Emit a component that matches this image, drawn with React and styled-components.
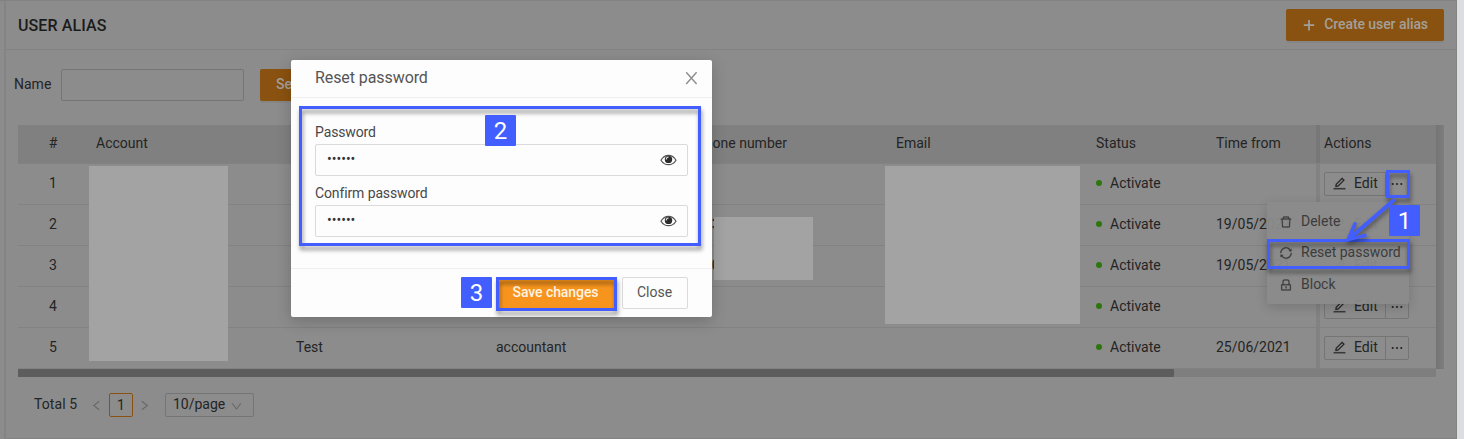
import React from "react";
import styled, { createGlobalStyle, css } from "styled-components";
import {
  AiOutlineEdit,
  AiOutlineDelete,
  AiOutlineSync,
  AiOutlineLock,
  AiOutlineLeft,
  AiOutlineRight,
  AiOutlineDown,
} from "react-icons/ai";

const Global = createGlobalStyle`
  * { box-sizing: border-box; }
  body {
    margin: 0;
    background: #8c8c8c;
    font-family: Roboto, "Liberation Sans", sans-serif;
    font-size: 14px;
    color: #242424;
    overflow: hidden;
  }
  svg { display: block; flex: none; }
`;

const Page = styled.div`
  position: relative;
  display: flex;
  width: 1464px;
  height: 439px;
  overflow: hidden;
`;
const SideEdge = styled.div`
  width: 6px;
  border-right: 2px solid #848484;
  border-top: 1px solid #828282;
`;
const Panel = styled.main`
  flex: 1;
  display: flex;
  flex-direction: column;
  border: 1px solid #838383;
  border-left: 0;
`;
const RightStrip = styled.div`
  width: 7px;
  background: #dcdde3;
`;
const PanelHeader = styled.header`
  display: flex;
  align-items: center;
  justify-content: space-between;
  height: 49px;
  padding: 0 12px;
  border-bottom: 1px solid #828282;
`;
const Title = styled.h1`
  margin: 0;
  font-size: 16px;
  font-weight: 500;
  letter-spacing: 0.1px;
  color: #1b1b1b;
`;
const PrimaryButton = styled.button`
  display: flex;
  align-items: center;
  gap: 8px;
  height: 32px;
  padding: 0 16px 2px;
  border: 0;
  border-radius: 2px;
  background: #8a5210;
  box-shadow: 0 2px 0 rgba(0, 0, 0, 0.04);
  color: #a3a09b;
  font: 500 14px Roboto, sans-serif;
  letter-spacing: -0.07px;
  svg { position: relative; top: 1px; }
`;
const SearchRow = styled.div`
  display: flex;
  align-items: center;
  height: 32px;
  margin: 19px 0 24px 8px;
`;
const SearchLabel = styled.label`
  width: 47px;
  padding-bottom: 2px;
`;
const SearchInput = styled.div`
  width: 183px;
  height: 32px;
  margin-right: 16px;
  border: 1px solid #757575;
  border-radius: 2px;
`;

const TableFrame = styled.section`
  display: grid;
  grid-template-columns: 1418px 8px;
  grid-template-rows: 244px 8px;
  margin-left: 12px;
  width: 1426px;
`;
const VerticalTrack = styled.div`
  background: linear-gradient(90deg, #757575, #7d7d7d);
`;
const HorizontalTrack = styled.div`
  background: #7e7e7e;
`;
const Thumb = styled.div`
  width: 1156px;
  height: 8px;
  border-radius: 1px;
  background: #5d5d5d;
`;
const TableRow = styled.div`
  display: grid;
  grid-template-columns: 70px 200px 200px 200px 200px 200px 120px 112px 116px;
  height: ${(p) => (p.$head ? 39 : 41)}px;
  border-bottom: 1px solid #828282;
  background: ${(p) => (p.$head ? "#808080" : "transparent")};
`;
const Cell = styled.div`
  display: flex;
  align-items: center;
  padding: 0 8px 2px;
  white-space: nowrap;
  ${(p) => p.$center && css`justify-content: center;`}
  ${(p) =>
    p.$fixed &&
    css`
      padding: 0 4px 2px;
      box-shadow: -4px 0 0 rgba(0, 0, 0, 0.07);
    `}
`;
const Status = styled.span`
  display: flex;
  align-items: center;
  gap: 8px;
  &::before {
    content: "";
    width: 6px;
    height: 6px;
    border-radius: 50%;
    background: #2d760d;
  }
`;
const ActionGroup = styled.div`
  display: flex;
  width: 85px;
  height: 24px;
  margin-top: 1px;
  border: 1px solid #757575;
  border-radius: 2px;
`;
const EditAction = styled.div`
  display: flex;
  align-items: center;
  gap: 7px;
  width: 61px;
  padding: 0 0 2px 7px;
  border-right: 1px solid #757575;
  svg { position: relative; top: 1px; }
`;
const MoreAction = styled.div`
  display: flex;
  flex: 1;
  align-items: center;
  justify-content: center;
`;

const Pagination = styled.nav`
  display: flex;
  align-items: center;
  height: 24px;
  margin: 16px 0 0 28px;
`;
const Total = styled.span`
  width: 56px;
  padding-bottom: 2px;
  letter-spacing: 0.1px;
`;
const Arrow = styled.span`
  width: ${(p) => p.$w}px;
  color: #626262;
`;
const CurrentPage = styled.span`
  display: flex;
  align-items: center;
  justify-content: center;
  width: 24px;
  height: 24px;
  margin-right: 5px;
  border: 1px solid #8a5210;
  border-radius: 2px;
`;
const PageSize = styled.div`
  display: flex;
  align-items: center;
  justify-content: space-between;
  width: 89px;
  height: 24px;
  margin-left: 8px;
  padding: 0 10px 2px 7px;
  border: 1px solid #757575;
  border-radius: 2px;
  svg { position: relative; top: 2px; color: #686868; }
`;

const placed = css`
  position: absolute;
  left: ${(p) => p.$x}px;
  top: ${(p) => p.$y}px;
  width: ${(p) => p.$w}px;
  height: ${(p) => p.$h}px;
`;
const Redaction = styled.div`
  ${placed}
  background: #a3a3a3;
`;
const Highlight = styled.div`
  ${placed}
  border: 3px solid #425eff;
  filter: drop-shadow(1px 4px 2px rgba(0, 0, 0, 0.42));
  pointer-events: none;
`;
const Badge = styled.div`
  position: absolute;
  left: ${(p) => p.$x}px;
  top: ${(p) => p.$y}px;
  display: flex;
  align-items: center;
  justify-content: center;
  width: 31px;
  height: 31px;
  border-radius: 1px;
  background: #425eff;
  color: #fff;
  font-family: Roboto, sans-serif;
  font-size: 24px;
`;
const ArrowDrawing = styled.svg`
  position: absolute;
  left: 1335px;
  top: 190px;
  filter: drop-shadow(1px 3px 2px rgba(0, 0, 0, 0.4));
`;

const Menu = styled.div`
  position: absolute;
  left: 1267px;
  top: 202px;
  width: 142px;
  height: 102px;
  padding: 3px 0 4px;
  border-radius: 2px;
  background: rgba(139, 139, 139, 0.95);
  box-shadow: 0 3px 12px rgba(0, 0, 0, 0.16);
`;
const MenuItem = styled.div`
  display: flex;
  align-items: center;
  gap: 8px;
  height: 31.6px;
  padding-left: 12px;
  color: #3c3c3c;
  svg { position: relative; top: 1px; stroke: currentColor; stroke-width: 18px; }
`;

const Modal = styled.div`
  position: absolute;
  left: 291px;
  top: 60px;
  display: flex;
  flex-direction: column;
  width: 421px;
  height: 257px;
  border-radius: 2px;
  background: #fdfdfd;
  box-shadow: 0 4px 16px rgba(0, 0, 0, 0.2);
  color: #555;
`;
const ModalHeader = styled.div`
  display: flex;
  align-items: center;
  justify-content: space-between;
  height: 38px;
  padding: 0 14px 2px 24px;
  border-bottom: 1px solid #f0f0f0;
  font-size: 16px;
  letter-spacing: -0.08px;
  svg { color: #8d8d8d; }
`;
const ModalBody = styled.div`
  flex: 1;
  padding: 24px 24px 0;
`;
const Field = styled.div`
  height: 61px;
`;
const FieldLabel = styled.label`
  display: block;
  height: 22px;
  line-height: 20px;
  letter-spacing: -0.12px;
  color: #484848;
`;
const PasswordBox = styled.div`
  display: flex;
  align-items: center;
  justify-content: space-between;
  width: 373px;
  height: 32px;
  padding: 0 10px 1px 11px;
  border: 1px solid #dadada;
  border-radius: 2px;
`;
const Dots = styled.span`
  color: #333;
  padding-bottom: 2px;
`;
const ModalFooter = styled.div`
  display: flex;
  justify-content: flex-end;
  gap: 8px;
  height: 49px;
  padding: 8px 24px 0;
  border-top: 1px solid #f0f0f0;
`;
const ModalButton = styled.button`
  height: 32px;
  padding: 0 1px 2px 0;
  width: ${(p) => (p.$primary ? 116 : 66)}px;
  border: 1px solid ${(p) => (p.$primary ? "#f7941d" : "#dadada")};
  border-radius: 2px;
  background: ${(p) => (p.$primary ? "#f7941d" : "#fdfdfd")};
  color: ${(p) => (p.$primary ? "#fff3e3" : "#555")};
  font: ${(p) => (p.$primary ? 500 : 400)} 14px Roboto, sans-serif;
  letter-spacing: ${(p) => (p.$primary ? -0.07 : 0)}px;
`;

function PlusIcon() {
  return (
    <svg width="14" height="14" fill="none" stroke="currentColor" strokeWidth="1.7">
      <path d="M7 2v10.4M1.8 7.2h10.4" />
    </svg>
  );
}

function MoreIcon() {
  return (
    <svg width="12" height="4" fill="currentColor">
      <circle cx="1.7" cy="2" r="1.1" />
      <circle cx="6" cy="2" r="1.1" />
      <circle cx="10.3" cy="2" r="1.1" />
    </svg>
  );
}

function CloseIcon() {
  return (
    <svg width="13" height="14" fill="none" stroke="currentColor" strokeWidth="1.4">
      <path d="M1.2 1.3L11.6 13M11.6 1.3L1.2 13" />
    </svg>
  );
}

function EyeIcon() {
  return (
    <svg width="17" height="12" viewBox="0 0 17 12" fill="none">
      <path d="M1 6.2C4.6 -.3 12.4 -.3 16 6.2C12.4 12.2 4.6 12.2 1 6.2Z" stroke="#555" strokeWidth="1.2" />
      <circle cx="8.5" cy="5.4" r="3.7" fill="#2c2c2c" />
      <path d="M6.3 5.5C6.2 3.9 7.2 3 8.5 3.1" stroke="#e4e4e4" strokeWidth="1.1" />
    </svg>
  );
}

const rows = [
  { id: 1 },
  { id: 2, phone: "093", from: "19/05/2021" },
  { id: 3, phone: "090", from: "19/05/2021" },
  { id: 4 },
  { id: 5, name: "Test", role: "accountant", from: "25/06/2021" },
];

function UserRow({ row }) {
  return (
    <TableRow>
      <Cell $center>{row.id}</Cell>
      <Cell />
      <Cell>{row.name}</Cell>
      <Cell>{row.role}</Cell>
      <Cell>{row.phone}</Cell>
      <Cell />
      <Cell><Status>Activate</Status></Cell>
      <Cell>{row.from}</Cell>
      <Cell $fixed>
        <ActionGroup>
          <EditAction><AiOutlineEdit size={15} stroke="currentColor" strokeWidth={14} />Edit</EditAction>
          <MoreAction><MoreIcon /></MoreAction>
        </ActionGroup>
      </Cell>
    </TableRow>
  );
}

function PasswordField({ label }) {
  return (
    <Field>
      <FieldLabel>{label}</FieldLabel>
      <PasswordBox>
        <Dots>••••••</Dots>
        <EyeIcon />
      </PasswordBox>
    </Field>
  );
}

export default function App() {
  return (
    <>
      <Global />
      <Page>
        <SideEdge />
        <Panel>
          <PanelHeader>
            <Title>USER ALIAS</Title>
            <PrimaryButton><PlusIcon />Create user alias</PrimaryButton>
          </PanelHeader>
          <SearchRow>
            <SearchLabel>Name</SearchLabel>
            <SearchInput />
            <PrimaryButton>Search</PrimaryButton>
          </SearchRow>
          <TableFrame>
            <div>
              <TableRow $head>
                <Cell $center>#</Cell>
                <Cell>Account</Cell>
                <Cell />
                <Cell />
                <Cell>Phone number</Cell>
                <Cell>Email</Cell>
                <Cell>Status</Cell>
                <Cell>Time from</Cell>
                <Cell $fixed>Actions</Cell>
              </TableRow>
              {rows.map((row) => <UserRow key={row.id} row={row} />)}
            </div>
            <VerticalTrack />
            <HorizontalTrack><Thumb /></HorizontalTrack>
          </TableFrame>
          <Pagination>
            <Total>Total 5</Total>
            <Arrow $w={19}><AiOutlineLeft size={13} /></Arrow>
            <CurrentPage>1</CurrentPage>
            <Arrow $w={19}><AiOutlineRight size={13} /></Arrow>
            <PageSize>10/page<AiOutlineDown size={13} /></PageSize>
          </Pagination>
        </Panel>
        <RightStrip />

        <Redaction $x={89} $y={166} $w={139} $h={195} />
        <Redaction $x={714} $y={217} $w={99} $h={63} />
        <Redaction $x={885} $y={166} $w={195} $h={158} />

        <Menu>
          <MenuItem><AiOutlineDelete size={14} />Delete</MenuItem>
          <MenuItem><AiOutlineSync size={14} />Reset password</MenuItem>
          <MenuItem><AiOutlineLock size={14} />Block</MenuItem>
        </Menu>

        <Modal>
          <ModalHeader>Reset password<CloseIcon /></ModalHeader>
          <ModalBody>
            <PasswordField label="Password" />
            <PasswordField label="Confirm password" />
          </ModalBody>
          <ModalFooter>
            <ModalButton $primary>Save changes</ModalButton>
            <ModalButton>Close</ModalButton>
          </ModalFooter>
        </Modal>

        <Highlight $x={299} $y={106} $w={402} $h={140} />
        <Highlight $x={496} $y={277} $w={121} $h={34} />
        <Highlight $x={1386} $y={170} $w={24} $h={28} />
        <Highlight $x={1267} $y={239} $w={143} $h={30} />
        <ArrowDrawing width="70" height="60" fill="none" stroke="#425eff">
          <path d="M59.5 9.5L14 49" strokeWidth="3.8" />
          <path d="M20.5 32.5L13.2 49.6L31.5 45" strokeWidth="3.4" />
        </ArrowDrawing>
        <Badge $x={485} $y={115}>2</Badge>
        <Badge $x={461} $y={277}>3</Badge>
        <Badge $x={1389} $y={205}>1</Badge>
      </Page>
    </>
  );
}
